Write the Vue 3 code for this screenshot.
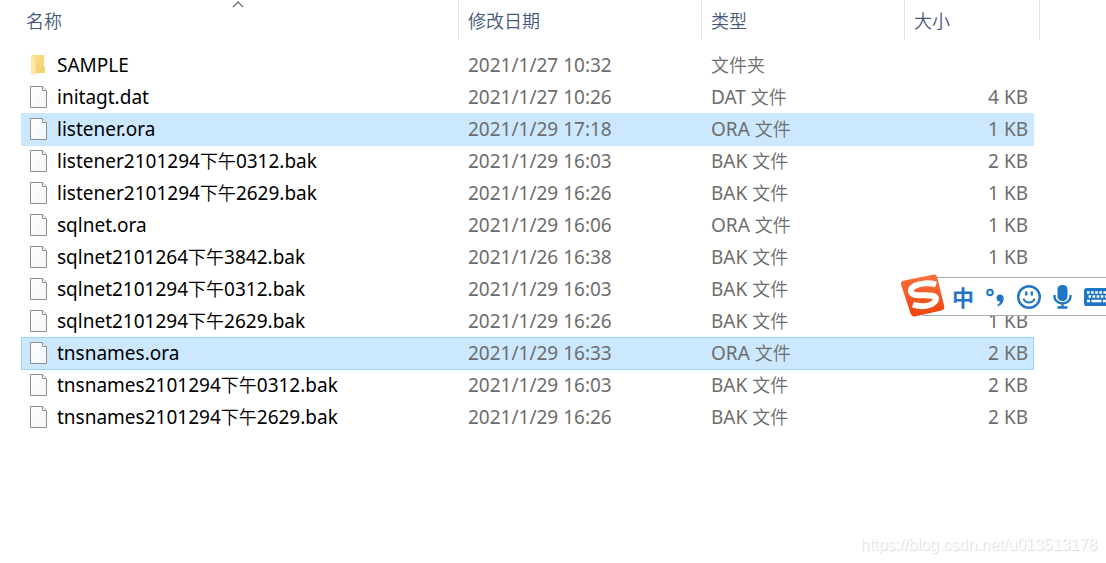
<script setup>
import { ref } from 'vue'

const columns = [
  { key: 'name', label: '名称', sorted: true },
  { key: 'date', label: '修改日期' },
  { key: 'type', label: '类型' },
  { key: 'size', label: '大小' }
]

const files = [
  { name: ['SAMPLE'], date: '2021/1/27 10:32', kind: '', type: '文件夹', size: '', folder: true },
  { name: ['initagt.dat'], date: '2021/1/27 10:26', kind: 'DAT', type: '文件', size: '4 KB' },
  { name: ['listener.ora'], date: '2021/1/29 17:18', kind: 'ORA', type: '文件', size: '1 KB' },
  { name: ['listener2101294', '下午', '0312.bak'], date: '2021/1/29 16:03', kind: 'BAK', type: '文件', size: '2 KB' },
  { name: ['listener2101294', '下午', '2629.bak'], date: '2021/1/29 16:26', kind: 'BAK', type: '文件', size: '1 KB' },
  { name: ['sqlnet.ora'], date: '2021/1/29 16:06', kind: 'ORA', type: '文件', size: '1 KB' },
  { name: ['sqlnet2101264', '下午', '3842.bak'], date: '2021/1/26 16:38', kind: 'BAK', type: '文件', size: '1 KB' },
  { name: ['sqlnet2101294', '下午', '0312.bak'], date: '2021/1/29 16:03', kind: 'BAK', type: '文件', size: '1 KB' },
  { name: ['sqlnet2101294', '下午', '2629.bak'], date: '2021/1/29 16:26', kind: 'BAK', type: '文件', size: '1 KB' },
  { name: ['tnsnames.ora'], date: '2021/1/29 16:33', kind: 'ORA', type: '文件', size: '2 KB' },
  { name: ['tnsnames2101294', '下午', '0312.bak'], date: '2021/1/29 16:03', kind: 'BAK', type: '文件', size: '2 KB' },
  { name: ['tnsnames2101294', '下午', '2629.bak'], date: '2021/1/29 16:26', kind: 'BAK', type: '文件', size: '2 KB' }
]

const selected = ref([2, 9])
const focused = ref(9)

function pick(index) {
  selected.value = [index]
  focused.value = index
}
</script>

<template>
  <main class="explorer" lang="zh-CN">
    <table class="files">
      <colgroup>
        <col />
        <col class="col-date" />
        <col class="col-type" />
        <col class="col-size" />
      </colgroup>
      <thead>
        <tr>
          <th v-for="col in columns" :key="col.key" scope="col">
            <button type="button" class="head">{{ col.label }}</button>
            <svg v-if="col.sorted" class="sort" width="12" height="7" viewBox="0 0 12 7" aria-hidden="true">
              <path d="M0.8 6.2 6 1 11.2 6.2" fill="none" stroke="#5f5f5f" stroke-width="1.1" />
            </svg>
          </th>
        </tr>
      </thead>
      <tbody>
        <tr
          v-for="(file, i) in files"
          :key="i"
          :class="{ selected: selected.includes(i), focused: focused === i }"
          @click="pick(i)"
        >
          <td>
            <div class="name">
              <svg v-if="file.folder" class="icon" width="18" height="24" viewBox="0 0 18 24" aria-hidden="true">
                <defs>
                  <linearGradient id="folder-back" x1="0" x2="1" y1="0" y2="1">
                    <stop offset="0" stop-color="#fbe08c" />
                    <stop offset="1" stop-color="#f0cf6c" />
                  </linearGradient>
                </defs>
                <path d="M1 2h13v11l1 1v6H5z" fill="url(#folder-back)" />
                <path d="M1 2l4.500 3v18L1 20.500z" fill="#ffe8a6" />
              </svg>
              <svg v-else class="icon" width="18" height="24" viewBox="0 0 18 24" aria-hidden="true">
                <defs>
                  <linearGradient id="sheet" x1="0" x2="1" y1="0" y2="1">
                    <stop offset="0" stop-color="#ffffff" />
                    <stop offset="1" stop-color="#f3f5f6" />
                  </linearGradient>
                </defs>
                <path d="M.5 1.500h12l4 4v17H.5z" fill="url(#sheet)" stroke="#8d8d8d" />
                <path d="M12.500 1.500v4h4" fill="#fff" stroke="#8d8d8d" />
              </svg>
              <span><span v-for="(part, p) in file.name" :key="p" :class="{ han: p === 1 }">{{ part }}</span></span>
            </div>
          </td>
          <td>{{ file.date }}</td>
          <td><template v-if="file.kind">{{ file.kind + ' ' }}</template><span class="han">{{ file.type }}</span></td>
          <td class="size">{{ file.size }}</td>
        </tr>
      </tbody>
    </table>

    <div class="ime" role="toolbar" aria-label="输入法">
      <button type="button" class="logo" aria-label="菜单">
        <svg width="46" height="44" viewBox="0 0 46 44" aria-hidden="true">
          <defs>
            <linearGradient id="logo-fill" x1="0" x2="0" y1="0" y2="1">
              <stop offset="0" stop-color="#fb7040" />
              <stop offset="1" stop-color="#ee440b" />
            </linearGradient>
          </defs>
          <path d="M4 6.500 33 .7Q36.500 0 37.300 3.500L44.200 32Q45 35.500 41.500 36.500L15.500 42.300Q11.500 43 10.500 39.300L1.200 11Q.2 7.500 4 6.500z" fill="url(#logo-fill)" />
          <path d="M36 10.500C29.500 8.500 20 9 14.500 12C8 16 10.500 21.500 20 21.300C30 21 38 21 35.500 26.500C32.500 32.500 21 33.500 13 30.500" fill="none" stroke="#fff" stroke-width="6" />
        </svg>
      </button>
      <button type="button" class="mode">中</button>
      <button type="button" aria-label="标点">
        <svg width="22" height="24" viewBox="0 0 22 24" aria-hidden="true">
          <circle cx="6" cy="7.500" r="2.800" fill="none" stroke="#1f75c6" stroke-width="2" />
          <path d="M16 9.500a3.500 3.500 0 0 1 3.700 3.700c0 4.100-2 6.800-5.700 8.100l-.8-1.400c1.900-1 2.700-2.100 2.800-3.400a3.500 3.500 0 0 1 0-7z" fill="#1f75c6" />
        </svg>
      </button>
      <button type="button" aria-label="表情">
        <svg width="26" height="26" viewBox="0 0 26 26" aria-hidden="true">
          <circle cx="13" cy="13" r="10.800" fill="none" stroke="#1f75c6" stroke-width="2.400" />
          <path d="M10.200 7.500v4M15.800 7.500v4" stroke="#1f75c6" stroke-width="2.400" />
          <path d="M7.500 14.500c1.500 5.300 9.500 5.300 11 0" fill="none" stroke="#1f75c6" stroke-width="2" />
        </svg>
      </button>
      <button type="button" aria-label="语音">
        <svg width="20" height="26" viewBox="0 0 20 26" aria-hidden="true">
          <rect x="5.500" y="1" width="10" height="16" rx="4.500" fill="#1f75c6" />
          <path d="M2.500 11v1.500a8 7 0 0 0 16 0V11M10.500 19v4.500M5.500 23.500h10" fill="none" stroke="#1f75c6" stroke-width="2.400" />
        </svg>
      </button>
      <button type="button" aria-label="键盘">
        <svg width="26" height="20" viewBox="0 0 26 20" aria-hidden="true">
          <rect x="3.100" y="2.100" width="23" height="15.800" rx="1.500" fill="#1f75c6" stroke="#1f75c6" stroke-width="2.200" />
          <path d="M5 5.500h21M6.500 9.500h20" stroke="#fff" stroke-width="2.400" stroke-dasharray="2.600 1.500" />
          <path d="M5 14h3M9.500 14h10M21 14h3" stroke="#fff" stroke-width="2.400" />
        </svg>
      </button>
    </div>

    <p class="watermark">https://blog.csdn.net/u013513178</p>
  </main>
</template>

<style>
body {
  margin: 0;
  background: #fff;
}
</style>

<style scoped>
.explorer {
  position: relative;
  min-height: 100vh;
  overflow: hidden;
  box-sizing: border-box;
  padding: 0 72px 0 21px;
  font-family: "Noto Sans", "Noto Sans CJK SC", sans-serif;
  font-size: 19px;
  line-height: 32px;
  color: #6d6d6d;
}
.files {
  width: 100%;
  table-layout: fixed;
  border-collapse: separate;
  border-spacing: 0;
}
.col-date { width: 243px; }
.col-type { width: 203px; }
.col-size { width: 129px; }
th {
  position: relative;
  height: 49px;
  padding: 0;
  text-align: left;
  vertical-align: top;
}
th::after {
  content: "";
  position: absolute;
  top: 0;
  right: 0;
  width: 1px;
  height: 40px;
  background: #e2e2e2;
}
th:last-child::after { right: -6px; }
.head {
  display: block;
  height: 40px;
  padding: 0 9px;
  border: 0;
  background: none;
  font-family: "Noto Sans CJK SC", sans-serif;
  font-size: 18px;
  font-weight: 350;
  color: #44597a;
}
th:first-child .head { padding-left: 5px; }
.sort {
  position: absolute;
  top: 1px;
  left: 50%;
  margin-left: -8px;
}
td {
  height: 32px;
  padding: 0 6px 0 9px;
  white-space: nowrap;
}
.size { text-align: right; }
.name {
  display: flex;
  align-items: center;
  gap: 9px;
  color: #000;
}
.icon { flex: none; }
.han {
  font-family: "Noto Sans CJK SC", sans-serif;
  font-size: 18px;
  font-weight: 350;
  line-height: 24px;
}
tr.selected {
  position: relative;
  background: #cce8ff;
  box-shadow: 0 1px #cce8ff;
}
tr.focused td:first-child::after {
  content: "";
  position: absolute;
  inset: 0 0 -1px;
  border: 1px solid #99d1ff;
  pointer-events: none;
}
.ime {
  position: absolute;
  top: 277px;
  right: 0;
  display: flex;
  align-items: center;
  gap: 10px;
  box-sizing: border-box;
  height: 39px;
  width: 184px;
  border: solid #a9a9b2;
  border-width: 1px 0;
  background: #fff;
}
.ime button {
  display: flex;
  flex: none;
  padding: 0;
  border: 0;
  background: none;
}
.ime .logo {
  margin-left: -22px;
  padding-bottom: 2px;
}
.ime .mode {
  margin-left: -4px;
  padding-bottom: 2px;
  font: bold 22px/24px "Noto Sans CJK SC", sans-serif;
  color: #1f75c6;
}
.watermark {
  position: absolute;
  right: 9px;
  bottom: 8px;
  margin: 0;
  font: 16px/20px "Liberation Sans", Arial, sans-serif;
  color: #fff;
  text-shadow: 1px 1px 1px #d6d6d6;
}
</style>
